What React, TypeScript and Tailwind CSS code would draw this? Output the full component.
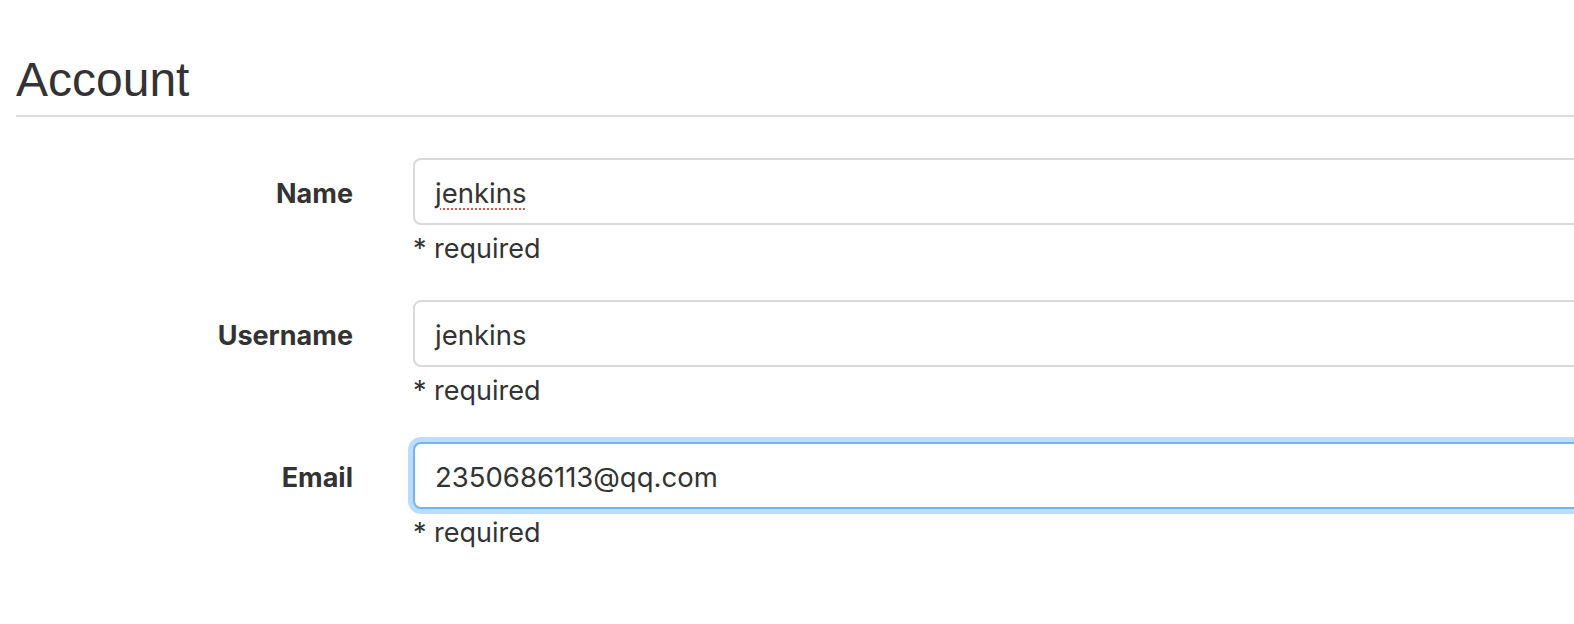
import React from "react";

const font = { fontFamily: "Inter, 'Noto Sans', sans-serif" };

function Row({ label, value, focused, spell }: { label: string; value: string; focused?: boolean; spell?: boolean }) {
  return (
    <div className="flex">
      <div className="w-[337px] shrink-0 h-[67px] pt-[6px] flex items-center justify-end text-[27px] font-bold text-[#333]">
        {label}
      </div>
      <div className="ml-[60px] shrink-0">
        <div
          className={
            focused
              ? "w-[1300px] h-[67px] rounded-[8px] border-2 border-[#72b4f2] shadow-[0_0_0_5px_#bddcfb] bg-white flex items-center pl-[20px] pt-[4px] text-[27.5px] text-[#333]"
              : "w-[1300px] h-[67px] rounded-[8px] border-2 border-[#d9d9d9] bg-white flex items-center pl-[20px] pt-[4px] text-[27.5px] text-[#333]"
          }
        >
          <span
            className={
              spell
                ? "underline decoration-dotted decoration-[#f05050] decoration-2 underline-offset-[6px]"
                : ""
            }
          >
            {value}
          </span>
        </div>
        <div className="mt-[7px] text-[27px] leading-[34px] text-[#333]">* required</div>
      </div>
    </div>
  );
}

export default function App() {
  return (
    <div className="w-[1574px] h-[624px] overflow-hidden bg-white" style={font}>
      <div className="pl-[16px] pt-[52px]">
        <h1
          className="text-[48px] leading-[56px] text-[#333] border-b-2 border-[#dcdcdc] pb-[7px] w-[1600px]"
          style={{ fontFamily: "'Liberation Sans', Arial, sans-serif" }}
        >
          Account
        </h1>
        <div className="mt-[41px] flex flex-col gap-[34px]">
          <Row label="Name" value="jenkins" spell />
          <Row label="Username" value="jenkins" />
          <Row label="Email" value="2350686113@qq.com" focused />
        </div>
      </div>
    </div>
  );
}
